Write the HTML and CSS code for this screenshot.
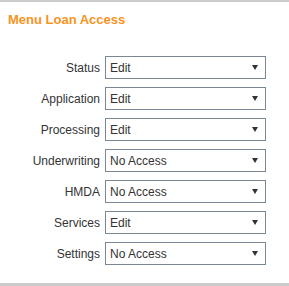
FILE: index.html
```html
<!DOCTYPE html>
<html>
<head>
<meta charset="utf-8">
<link rel="stylesheet" href="styles.css">
</head>
<body>
<div class="panel">
  <h2 class="title">Menu Loan Access</h2>
  <div class="form">
    <label class="label">Status</label>
    <div class="select-wrap"><select class="select"><option>Edit</option><option>No Access</option></select></div>
    <label class="label">Application</label>
    <div class="select-wrap"><select class="select"><option>Edit</option><option>No Access</option></select></div>
    <label class="label">Processing</label>
    <div class="select-wrap"><select class="select"><option>Edit</option><option>No Access</option></select></div>
    <label class="label">Underwriting</label>
    <div class="select-wrap"><select class="select"><option>No Access</option><option>Edit</option></select></div>
    <label class="label">HMDA</label>
    <div class="select-wrap"><select class="select"><option>No Access</option><option>Edit</option></select></div>
    <label class="label">Services</label>
    <div class="select-wrap"><select class="select"><option>Edit</option><option>No Access</option></select></div>
    <label class="label">Settings</label>
    <div class="select-wrap"><select class="select"><option>No Access</option><option>Edit</option></select></div>
  </div>
</div>
</body>
</html>
```
FILE: styles.css
```css
html, body {
  margin: 0;
  padding: 0;
  background: #ffffff;
}
body {
  font-family: "Liberation Sans", Arial, sans-serif;
}
.panel {
  box-sizing: border-box;
  height: 286px;
  border-top: 2px solid #cccccc;
  border-bottom: 3px solid #cccccc;
  padding: 10px 0 18px 0;
}
.title {
  margin: 0 0 0 8px;
  font-size: 13px;
  line-height: 15px;
  font-weight: bold;
  color: #f7931e;
}
.form {
  margin-top: 29px;
  display: grid;
  grid-template-columns: 100px 161px;
  column-gap: 5px;
  row-gap: 8px;
  align-items: center;
}
.label {
  text-align: right;
  font-size: 12px;
  color: #333333;
  line-height: 14px;
  white-space: nowrap;
}
.select-wrap {
  position: relative;
  height: 23px;
}
.select {
  appearance: none;
  -webkit-appearance: none;
  box-sizing: border-box;
  width: 161px;
  height: 23px;
  margin: 0;
  padding: 0 16px 0 4px;
  border: 1px solid #7a8794;
  border-radius: 0;
  background: #ffffff;
  font-family: "Liberation Sans", Arial, sans-serif;
  font-size: 12px;
  color: #333333;
  outline: none;
}
.select-wrap::after {
  content: "";
  position: absolute;
  right: 8px;
  top: 9px;
  width: 0;
  height: 0;
  border-left: 3px solid transparent;
  border-right: 3px solid transparent;
  border-top: 5px solid #333333;
  pointer-events: none;
}
```
